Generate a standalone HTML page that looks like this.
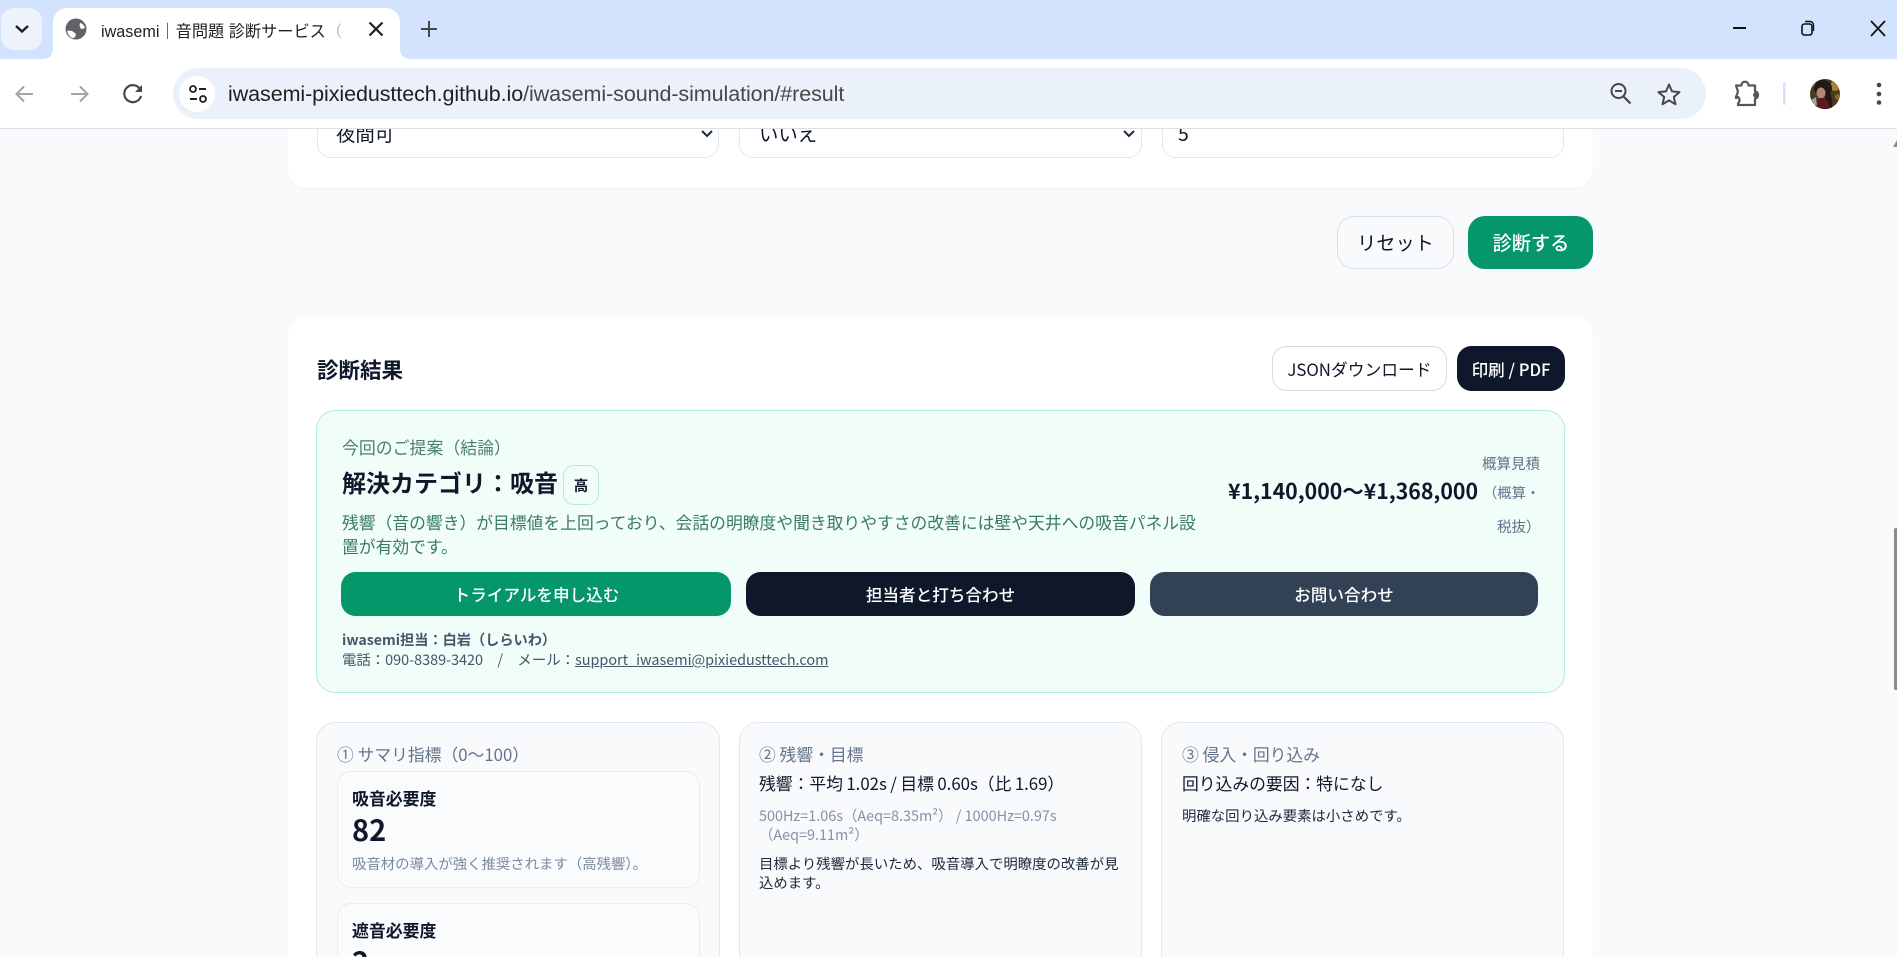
<!DOCTYPE html>
<html lang="ja"><head><meta charset="utf-8"><title>iwasemi</title>
<style>
*{box-sizing:border-box}
html,body{margin:0;padding:0;width:1897px;height:957px;overflow:hidden;background:#f8fafc}
body{position:relative;font-family:"Noto Sans CJK JP","Liberation Sans",sans-serif;color:#0f172a}
.a{position:absolute}
.t{position:absolute;white-space:nowrap;line-height:24px;height:24px}
.b{position:absolute;display:flex;align-items:center;justify-content:center;white-space:nowrap}
.card{position:absolute;background:#fff;border-radius:19px;box-shadow:0 1px 2px rgba(15,23,42,.04)}
.in{position:absolute;background:#fff;border:1px solid #e2e8f0;border-radius:14px}
.sub{position:absolute;left:337px;width:363px;border:1px solid #e9edf2;border-radius:14px;background:#f9fbfc}
.col{position:absolute;top:722px;height:235px;background:#f8fafc;border:1px solid #e2e8f0;border-bottom:0;border-radius:19px 19px 0 0}
svg{position:absolute;overflow:visible}
#clip{position:absolute;left:0;top:0;width:1897px;height:957px;overflow:hidden}
</style></head><body>
<div id="clip">
<!-- page content -->
<div class="card" style="left:288px;top:100px;width:1305px;height:88px"></div>
<div class="in" style="left:317px;top:100px;width:402px;height:58px"></div>
<div class="in" style="left:739px;top:100px;width:403px;height:58px"></div>
<div class="in" style="left:1162px;top:100px;width:402px;height:58px"></div>
<div class="t" style="left:336px;top:121px;font-size:19.4px">夜間可</div>
<div class="t" style="left:759px;top:121px;font-size:19.4px">いいえ</div>
<div class="t" style="left:1178px;top:121px;font-size:19.4px">5</div>
<svg style="left:0;top:0" width="1897" height="957" fill="none" stroke="#1f2937" stroke-width="2"><path d="M702 131l5 5 5-5M1124 131l5 5 5-5"/></svg>

<div class="b" style="left:1337px;top:216px;width:117px;height:53px;padding-bottom:2px;background:#f8fafc;border:1px solid #d9dfe8;border-radius:17px;font-size:19.2px">リセット</div>
<div class="b" style="left:1468px;top:216px;width:125px;height:53px;padding:0 0 2px 1px;background:#059669;border-radius:17px;font-size:19.2px;color:#fff;font-weight:500">診断する</div>

<div class="card" style="left:288px;top:317px;width:1305px;height:640px;border-radius:19px 19px 0 0"></div>
<div class="t" style="left:317px;top:358px;font-size:21.5px;font-weight:600;line-height:24px">診断結果</div>
<div class="b" style="left:1272px;top:346px;width:175px;height:45px;background:#fff;border:1px solid #d5dbe5;border-radius:14.5px;font-size:16.8px">JSONダウンロード</div>
<div class="b" style="left:1457px;top:346px;width:108px;height:45px;background:#0f172a;border-radius:14.5px;font-size:16.6px;color:#fff;font-weight:500">印刷 / PDF</div>

<div class="a" style="left:316px;top:410px;width:1249px;height:283px;background:#f0fdf9;border:1px solid #b5ecd6;border-radius:19px"></div>
<div class="t" style="left:342px;top:435px;font-size:16.9px;color:#4b7f70">今回のご提案（結論）</div>
<div class="t" style="left:342px;top:470px;font-size:24px;font-weight:700;line-height:24px">解決カテゴリ：吸音</div>
<div class="b" style="left:563px;top:465px;width:36px;height:40px;border:1px solid #b5ecd6;border-radius:11px;font-size:14.5px;font-weight:600">高</div>
<div class="t" style="left:342px;top:510px;font-size:16.8px;color:#3b7a68">残響（音の響き）が目標値を上回っており、会話の明瞭度や聞き取りやすさの改善には壁や天井への吸音パネル設</div>
<div class="t" style="left:342px;top:534px;font-size:16.8px;color:#3b7a68">置が有効です。</div>

<div class="t" style="right:357px;top:452px;font-size:14.5px;color:#64748b">概算見積</div>
<div class="t" style="left:1228px;top:479px;font-size:21.3px;font-weight:600">¥1,140,000〜¥1,368,000</div>
<div class="t" style="left:1483px;top:481px;font-size:14.3px;color:#64748b">（概算・</div>
<div class="t" style="left:1497px;top:515px;font-size:14.5px;color:#64748b">税抜）</div>

<div class="b" style="left:341px;top:572px;width:390px;height:44px;padding:0 0 1px 1px;background:#059669;border-radius:14.5px;color:#fff;font-size:16.6px;font-weight:500">トライアルを申し込む</div>
<div class="b" style="left:746px;top:572px;width:389px;height:44px;padding:0 0 1px 0;background:#0f172a;border-radius:14.5px;color:#fff;font-size:16.6px;font-weight:500">担当者と打ち合わせ</div>
<div class="b" style="left:1150px;top:572px;width:388px;height:44px;padding:0 0 1px 0;background:#334155;border-radius:14.5px;color:#fff;font-size:16.6px;font-weight:500">お問い合わせ</div>

<div class="t" style="left:342px;top:628px;font-size:14.2px;font-weight:600;color:#475569">iwasemi担当：白岩（しらいわ）</div>
<div class="t" style="left:342px;top:648px;font-size:14.4px;color:#475569;white-space:pre">電話：090-8389-3420　/　メール：<span style="text-decoration:underline">support_iwasemi@pixiedusttech.com</span></div>

<div class="col" style="left:316px;width:404px"></div>
<div class="col" style="left:739px;width:403px"></div>
<div class="col" style="left:1161px;width:403px"></div>

<div class="t" style="left:337px;top:742px;font-size:16.8px;color:#64748b">① サマリ指標（0〜100）</div>
<div class="sub" style="top:771px;height:117px"></div>
<div class="t" style="left:352px;top:786px;font-size:16.9px;font-weight:600">吸音必要度</div>
<div class="t" style="left:352px;top:817px;font-size:29px;font-weight:700">82</div>
<div class="t" style="left:352px;top:852px;font-size:14.4px;color:#7c8aa0">吸音材の導入が強く推奨されます（高残響）。</div>
<div class="sub" style="top:903px;height:54px;border-bottom:0;border-radius:14px 14px 0 0"></div>
<div class="t" style="left:352px;top:918px;font-size:16.9px;font-weight:600">遮音必要度</div>
<div class="t" style="left:352px;top:949px;height:8px;overflow:hidden;font-size:29px;font-weight:700">2</div>

<div class="t" style="left:759px;top:742px;font-size:16.8px;color:#64748b">② 残響・目標</div>
<div class="t" style="left:759px;top:771px;font-size:16.8px;word-spacing:-.3px">残響：平均 1.02s / 目標 0.60s（比 1.69）</div>
<div class="t" style="left:759px;top:804px;font-size:14.4px;color:#8492a6">500Hz=1.06s（Aeq=8.35m²） / 1000Hz=0.97s</div>
<div class="t" style="left:759px;top:823px;font-size:14.4px;color:#8492a6">（Aeq=9.11m²）</div>
<div class="t" style="left:759px;top:852px;font-size:14.4px;color:#1e293b">目標より残響が長いため、吸音導入で明瞭度の改善が見</div>
<div class="t" style="left:759px;top:871px;font-size:14.4px;color:#1e293b">込めます。</div>

<div class="t" style="left:1182px;top:742px;font-size:16.8px;color:#64748b">③ 侵入・回り込み</div>
<div class="t" style="left:1182px;top:771px;font-size:16.8px">回り込みの要因：特になし</div>
<div class="t" style="left:1182px;top:804px;font-size:14.4px;color:#1e293b">明確な回り込み要素は小さめです。</div>

<!-- scrollbar -->
<div class="a" style="left:1894px;top:528px;width:3px;height:162px;background:#8a8a8a;border-radius:2px 0 0 2px"></div>
<svg style="left:0;top:0" width="1897" height="957"><path d="M1897 140l-4 7h4z" fill="#8a8a8a"/></svg>

<!-- browser chrome -->
<div class="a" style="left:0;top:0;width:1897px;height:59px;background:#d3e3fd"></div>
<div class="a" style="left:0;top:59px;width:1897px;height:70px;background:#fff;border-bottom:1px solid #dcdfe3"></div>
<div class="a" style="left:1px;top:8px;width:41px;height:42px;background:#edf2fc;border-radius:13px"></div>
<div class="a" style="left:53px;top:8px;width:347px;height:51px;background:#fff;border-radius:14px 14px 0 0"></div>
<svg style="left:0;top:0" width="1897" height="128" fill="none">
 <path d="M42 59c8 0 11-4 11-11v11zM400 48c0 7 3 11 11 11h-11z" fill="#fff"/>
 <path d="M16 26l6 5.500 6-5.500" stroke="#1f1f1f" stroke-width="2.400"/>
 <circle cx="76" cy="29" r="10.500" fill="#5f6368"/>
 <path d="M67 31c3-1 6 0 8 2s0 5-2 5-5-3-6-7zM80 23c2 0 4 2 5 5l-3 1c-2 0-3-4-2-6z" fill="#fff"/>
 <path d="M369.500 22.500l13 13M382.500 22.500l-13 13" stroke="#1f1f1f" stroke-width="2.200"/>
 <path d="M429 21v16M421 29h16" stroke="#444746" stroke-width="2"/>
 <path d="M1733 28h13" stroke="#111" stroke-width="2"/>
 <rect x="1802" y="24" width="10" height="11" rx="2.500" stroke="#111" stroke-width="1.600"/>
 <path d="M1805 21.500h5c2 0 3.500 1.500 3.500 3.500v6" stroke="#111" stroke-width="1.400"/>
 <path d="M1871 21l14 15M1885 21l-14 15" stroke="#111" stroke-width="1.800"/>
</svg>
<div class="t" style="left:101px;top:20px;font-size:16.2px;line-height:24px;color:#1f1f1f;width:245px;overflow:hidden;font-family:'Liberation Sans','Noto Sans CJK JP',sans-serif">iwasemi｜音問題 診断サービス（</div>
<div class="a" style="left:322px;top:16px;width:28px;height:28px;background:linear-gradient(90deg,rgba(255,255,255,0),#fff 85%)"></div>

<div class="a" style="left:173px;top:68px;width:1533px;height:51px;background:#ebf1fa;border-radius:26px"></div>
<div class="a" style="left:179px;top:76px;width:36px;height:36px;background:#fff;border-radius:50%"></div>
<div class="t" style="left:228px;top:82px;font-size:21.5px;color:#1f1f1f;font-family:'Liberation Sans',sans-serif;letter-spacing:-.08px">iwasemi-pixiedusttech.github.io<span style="color:#474747">/iwasemi-sound-simulation/#result</span></div>

<svg style="left:0;top:0" width="1897" height="128" fill="none">
 <path d="M33 94H17M24 86.500L16.500 94l7.500 7.500" stroke="#a3a5a8" stroke-width="2"/>
 <path d="M71 94h16M80 86.500L87.500 94 80 101.500" stroke="#a3a5a8" stroke-width="2"/>
 <path d="M140.500 90a8.500 8.500 0 1 0 .5 6" stroke="#474747" stroke-width="2.200"/>
 <path d="M142 85v7h-7z" fill="#474747"/>
 <circle cx="193" cy="89" r="3" stroke="#1f1f1f" stroke-width="1.800"/>
 <path d="M199 89h7M190 99h7" stroke="#1f1f1f" stroke-width="2"/>
 <circle cx="203" cy="99" r="3" stroke="#1f1f1f" stroke-width="1.800"/>
 <circle cx="1618.500" cy="91" r="7" stroke="#474747" stroke-width="2"/>
 <path d="M1615 91h7" stroke="#474747" stroke-width="2"/>
 <path d="M1623.500 96.500l7 7" stroke="#474747" stroke-width="2.200"/>
 <path d="M1669 84.500l3 6.900 7.500.7-5.700 4.900 1.700 7.300-6.500-3.900-6.500 3.900 1.700-7.300-5.700-4.900 7.500-.7z" stroke="#474747" stroke-width="2" stroke-linejoin="round"/>
 <path d="M1736 85.500h5.500c0-5 7-5 7 0h6.500v6c4 0 4 7 0 7v6.500h-17v-1.500c2-2 2-5 0-6.500l-2 1v-1l2-5.500z" stroke="#545759" stroke-width="2.200" stroke-linejoin="round"/>
 <circle cx="1755.500" cy="95" r="2.500" fill="#545759"/>
 <rect x="1783" y="82" width="2.500" height="23" rx="1" fill="#d3e3fd"/>
 <circle cx="1879" cy="85" r="2.300" fill="#474747"/><circle cx="1879" cy="94" r="2.300" fill="#474747"/><circle cx="1879" cy="102.500" r="2.300" fill="#474747"/>
 <defs><clipPath id="av"><circle cx="1825" cy="94" r="15"/></clipPath></defs>
 <g clip-path="url(#av)">
  <rect x="1810" y="79" width="30" height="30" fill="#4a3a22"/>
  <circle cx="1835" cy="86" r="5" fill="#a88334"/><circle cx="1813" cy="84" r="3" fill="#7a6a3c"/>
  <circle cx="1838" cy="97" r="3" fill="#8a6a2a"/>
  <ellipse cx="1823" cy="88" rx="9" ry="8" fill="#241818"/>
  <ellipse cx="1821" cy="93" rx="4.500" ry="5.500" fill="#b08a78"/>
  <path d="M1826 90c5 2 7 8 6 19h-8z" fill="#2a1515"/>
  <path d="M1814 109c0-8 4-11 8-11s7 3 8 11z" fill="#5c1a1e"/>
  <path d="M1811 100l5-3 1 8h-6z" fill="#9aa0a8"/>
 </g>
</svg>
</div>
</body></html>
